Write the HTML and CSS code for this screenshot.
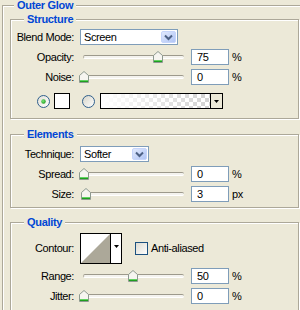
FILE: index.html
```html
<!DOCTYPE html>
<html>
<head>
<meta charset="utf-8">
<link rel="stylesheet" href="styles.css">
</head>
<body>
<fieldset class="group outer">
  <legend class="title">Outer Glow</legend>

  <fieldset class="group sub structure">
    <legend class="title">Structure</legend>
    <div class="row">
      <span class="lbl">Blend Mode:</span>
      <div class="select blend"><span class="val">Screen</span>
        <svg class="drop" width="15" height="12" viewBox="0 0 15 12"><defs><linearGradient id="dg1" x1="0" y1="0" x2="1" y2="1"><stop offset="0" stop-color="#e3ebfe"/><stop offset="1" stop-color="#aec3f4"/></linearGradient></defs><rect x="0.5" y="0.5" width="14" height="11" rx="1.5" fill="url(#dg1)" stroke="#c6d5fb"/><path d="M4 4.5L7.5 8L11 4.5" fill="none" stroke="#4d6185" stroke-width="2"/></svg>
      </div>
    </div>
    <div class="row">
      <span class="lbl">Opacity:</span>
      <div class="slider"><div class="track"></div>
        <svg class="thumb" style="left:73px" width="10" height="12" viewBox="0 0 10 12"><path d="M0.5 11.5V4.5L5 0.5L9.5 4.5V11.5Z" fill="#f6f5f0" stroke="#8d998f"/><path d="M1 9.5H9" stroke="#62d262"/><path d="M1 10.5H9" stroke="#1f9f1f"/></svg>
      </div>
      <div class="num">75</div><span class="unit">%</span>
    </div>
    <div class="row">
      <span class="lbl">Noise:</span>
      <div class="slider"><div class="track"></div>
        <svg class="thumb" style="left:-1px" width="10" height="12" viewBox="0 0 10 12"><path d="M0.5 11.5V4.5L5 0.5L9.5 4.5V11.5Z" fill="#f6f5f0" stroke="#8d998f"/><path d="M1 9.5H9" stroke="#62d262"/><path d="M1 10.5H9" stroke="#1f9f1f"/></svg>
      </div>
      <div class="num">0</div><span class="unit">%</span>
    </div>
    <div class="row colors">
      <svg class="radio r1" width="13" height="13" viewBox="0 0 13 13"><defs><linearGradient id="rg1" x1="0" y1="0" x2="1" y2="1"><stop offset="0" stop-color="#e2e0d6"/><stop offset="1" stop-color="#ffffff"/></linearGradient><radialGradient id="dt1" cx="0.4" cy="0.4" r="0.7"><stop offset="0" stop-color="#7ae87a"/><stop offset="1" stop-color="#179617"/></radialGradient></defs><circle cx="6.5" cy="6.5" r="6" fill="url(#rg1)" stroke="#2f5f8c"/><circle cx="6.5" cy="6.5" r="2.2" fill="url(#dt1)"/></svg>
      <div class="swatch"></div>
      <svg class="radio r2" width="13" height="13" viewBox="0 0 13 13"><defs><linearGradient id="rg2" x1="0" y1="0" x2="1" y2="1"><stop offset="0" stop-color="#d6d4c8"/><stop offset="1" stop-color="#ffffff"/></linearGradient></defs><circle cx="6.5" cy="6.5" r="6" fill="url(#rg2)" stroke="#2f5f8c"/></svg>
      <div class="gradpick">
        <div class="gradfill"></div>
        <div class="gradarrow"><svg width="5" height="3" viewBox="0 0 5 3"><path d="M0 0H5L2.5 3Z" fill="#000"/></svg></div>
      </div>
    </div>
  </fieldset>

  <fieldset class="group sub elements">
    <legend class="title">Elements</legend>
    <div class="row">
      <span class="lbl">Technique:</span>
      <div class="select tech"><span class="val">Softer</span>
        <svg class="drop" width="15" height="12" viewBox="0 0 15 12"><defs><linearGradient id="dg2" x1="0" y1="0" x2="1" y2="1"><stop offset="0" stop-color="#e3ebfe"/><stop offset="1" stop-color="#aec3f4"/></linearGradient></defs><rect x="0.5" y="0.5" width="14" height="11" rx="1.5" fill="url(#dg2)" stroke="#c6d5fb"/><path d="M4 4.5L7.5 8L11 4.5" fill="none" stroke="#4d6185" stroke-width="2"/></svg>
      </div>
    </div>
    <div class="row">
      <span class="lbl">Spread:</span>
      <div class="slider"><div class="track"></div>
        <svg class="thumb" style="left:-1px" width="10" height="12" viewBox="0 0 10 12"><path d="M0.5 11.5V4.5L5 0.5L9.5 4.5V11.5Z" fill="#f6f5f0" stroke="#8d998f"/><path d="M1 9.5H9" stroke="#62d262"/><path d="M1 10.5H9" stroke="#1f9f1f"/></svg>
      </div>
      <div class="num">0</div><span class="unit">%</span>
    </div>
    <div class="row">
      <span class="lbl">Size:</span>
      <div class="slider"><div class="track"></div>
        <svg class="thumb" style="left:1px" width="10" height="12" viewBox="0 0 10 12"><path d="M0.5 11.5V4.5L5 0.5L9.5 4.5V11.5Z" fill="#f6f5f0" stroke="#8d998f"/><path d="M1 9.5H9" stroke="#62d262"/><path d="M1 10.5H9" stroke="#1f9f1f"/></svg>
      </div>
      <div class="num">3</div><span class="unit">px</span>
    </div>
  </fieldset>

  <fieldset class="group sub quality">
    <legend class="title">Quality</legend>
    <div class="row contour-row">
      <span class="lbl">Contour:</span>
      <div class="contour">
        <svg class="cprev" width="29" height="29" viewBox="0 0 29 29"><path d="M0 29L29 0V29Z" fill="#aca899"/></svg>
        <div class="carrow"><svg width="5" height="3" viewBox="0 0 5 3"><path d="M0 0H5L2.5 3Z" fill="#000"/></svg></div>
      </div>
      <svg class="check" width="13" height="13" viewBox="0 0 13 13"><defs><linearGradient id="cg1" x1="0" y1="0" x2="1" y2="1"><stop offset="0" stop-color="#dcdad0"/><stop offset="1" stop-color="#ffffff"/></linearGradient></defs><rect x="0.5" y="0.5" width="12" height="12" fill="url(#cg1)" stroke="#1c5180"/></svg>
      <span class="check-lbl">Anti-aliased</span>
    </div>
    <div class="row">
      <span class="lbl">Range:</span>
      <div class="slider"><div class="track"></div>
        <svg class="thumb" style="left:48px" width="10" height="12" viewBox="0 0 10 12"><path d="M0.5 11.5V4.5L5 0.5L9.5 4.5V11.5Z" fill="#f6f5f0" stroke="#8d998f"/><path d="M1 9.5H9" stroke="#62d262"/><path d="M1 10.5H9" stroke="#1f9f1f"/></svg>
      </div>
      <div class="num">50</div><span class="unit">%</span>
    </div>
    <div class="row">
      <span class="lbl">Jitter:</span>
      <div class="slider"><div class="track"></div>
        <svg class="thumb" style="left:-1px" width="10" height="12" viewBox="0 0 10 12"><path d="M0.5 11.5V4.5L5 0.5L9.5 4.5V11.5Z" fill="#f6f5f0" stroke="#8d998f"/><path d="M1 9.5H9" stroke="#62d262"/><path d="M1 10.5H9" stroke="#1f9f1f"/></svg>
      </div>
      <div class="num">0</div><span class="unit">%</span>
    </div>
  </fieldset>
</fieldset>
</body>
</html>
```
FILE: styles.css
```css
html, body {
  margin: 0;
  padding: 0;
  width: 300px;
  height: 310px;
  overflow: hidden;
  background: #ece9d8;
}
body {
  font-family: "Liberation Sans", Arial, sans-serif;
  font-size: 11px;
  letter-spacing: -0.4px;
  color: #000;
}
.group {
  border: 1px solid #aca899;
  box-shadow: inset 1px 1px 0 #fff, 1px 1px 0 #fff;
  margin: 0;
  padding: 0;
  min-width: 0;
}
.title {
  font-weight: bold;
  color: #0046d5;
  line-height: 11px;
  height: 11px;
  padding: 0 3px;
  background: #ece9d8;
  letter-spacing: -0.3px;
}
.outer {
  margin-left: 2px;
  width: 298px;
  box-sizing: border-box;
  border-right: none;
  border-bottom: none;
}
.outer > .title { margin-left: 11px; }
.sub { margin: 0 1px 0 7px; }
.sub > .title { margin-left: 13px; }
.structure { margin-top: 3px; padding: 2px 0 3px; }
.elements { margin-top: 10px; padding: 4px 0 3px; }
.quality { margin-top: 9px; padding: 3px 0 4px; border-bottom: none; }

.row {
  display: flex;
  align-items: center;
  height: 20px;
  line-height: 13px;
}
.lbl {
  flex: none;
  width: 63px;
  margin-right: 6px;
  text-align: right;
  white-space: nowrap;
}
.select {
  flex: none;
  box-sizing: border-box;
  height: 16px;
  border: 1px solid #7f9db9;
  background: #fff;
  display: flex;
  align-items: center;
  justify-content: space-between;
  padding: 0 1px 0 3px;
}
.blend { width: 98px; }
.tech { width: 69px; }
.drop { display: block; flex: none; }

.slider {
  position: relative;
  flex: none;
  width: 111px;
  height: 14px;
}
.track {
  position: absolute;
  left: 3px;
  top: 5px;
  width: 101px;
  height: 4px;
  box-sizing: border-box;
  border-radius: 2px;
  background: #f4f3ee;
  border-top: 1px solid #9d9a8c;
  border-left: 1px solid #b5b2a5;
  border-bottom: 1px solid #fff;
}
.thumb {
  position: absolute;
  top: 1px;
  display: block;
}
.num {
  flex: none;
  box-sizing: border-box;
  width: 38px;
  height: 16px;
  border: 1px solid #7f9db9;
  background: #fff;
  padding-left: 5px;
  line-height: 14px;
}
.unit { margin-left: 3px; }

.colors { height: 28px; }
.radio { flex: none; display: block; }
.r1 { margin-left: 26px; }
.swatch {
  flex: none;
  box-sizing: border-box;
  width: 16px;
  height: 16px;
  border: 1px solid #000;
  background: #fff;
  margin-left: 4px;
}
.r2 { margin-left: 12px; }
.gradpick {
  flex: none;
  display: flex;
  box-sizing: border-box;
  width: 123px;
  height: 16px;
  margin-left: 5px;
  border: 1px solid #000;
}
.gradfill {
  flex: 1;
  background:
    linear-gradient(to right, #fff 0%, rgba(255,255,255,0) 100%),
    conic-gradient(#d2d2d2 25%, #fff 0 50%, #d2d2d2 0 75%, #fff 0) 0 0 / 8px 8px;
}
.gradarrow {
  flex: none;
  width: 11px;
  border-left: 1px solid #000;
  background: #ece9d8;
  display: flex;
  align-items: center;
  justify-content: center;
}
.gradarrow svg, .carrow svg { display: block; }

.contour-row { height: 35px; }
.contour {
  flex: none;
  display: flex;
  box-sizing: border-box;
  width: 42px;
  height: 31px;
  border: 1px solid #000;
  background: #fff;
}
.cprev { display: block; flex: none; }
.carrow {
  flex: 1;
  border-left: 1px solid #000;
  display: flex;
  justify-content: center;
  padding-top: 11px;
}
.check { flex: none; display: block; margin-left: 13px; }
.check-lbl { margin-left: 3px; white-space: nowrap; }
```
